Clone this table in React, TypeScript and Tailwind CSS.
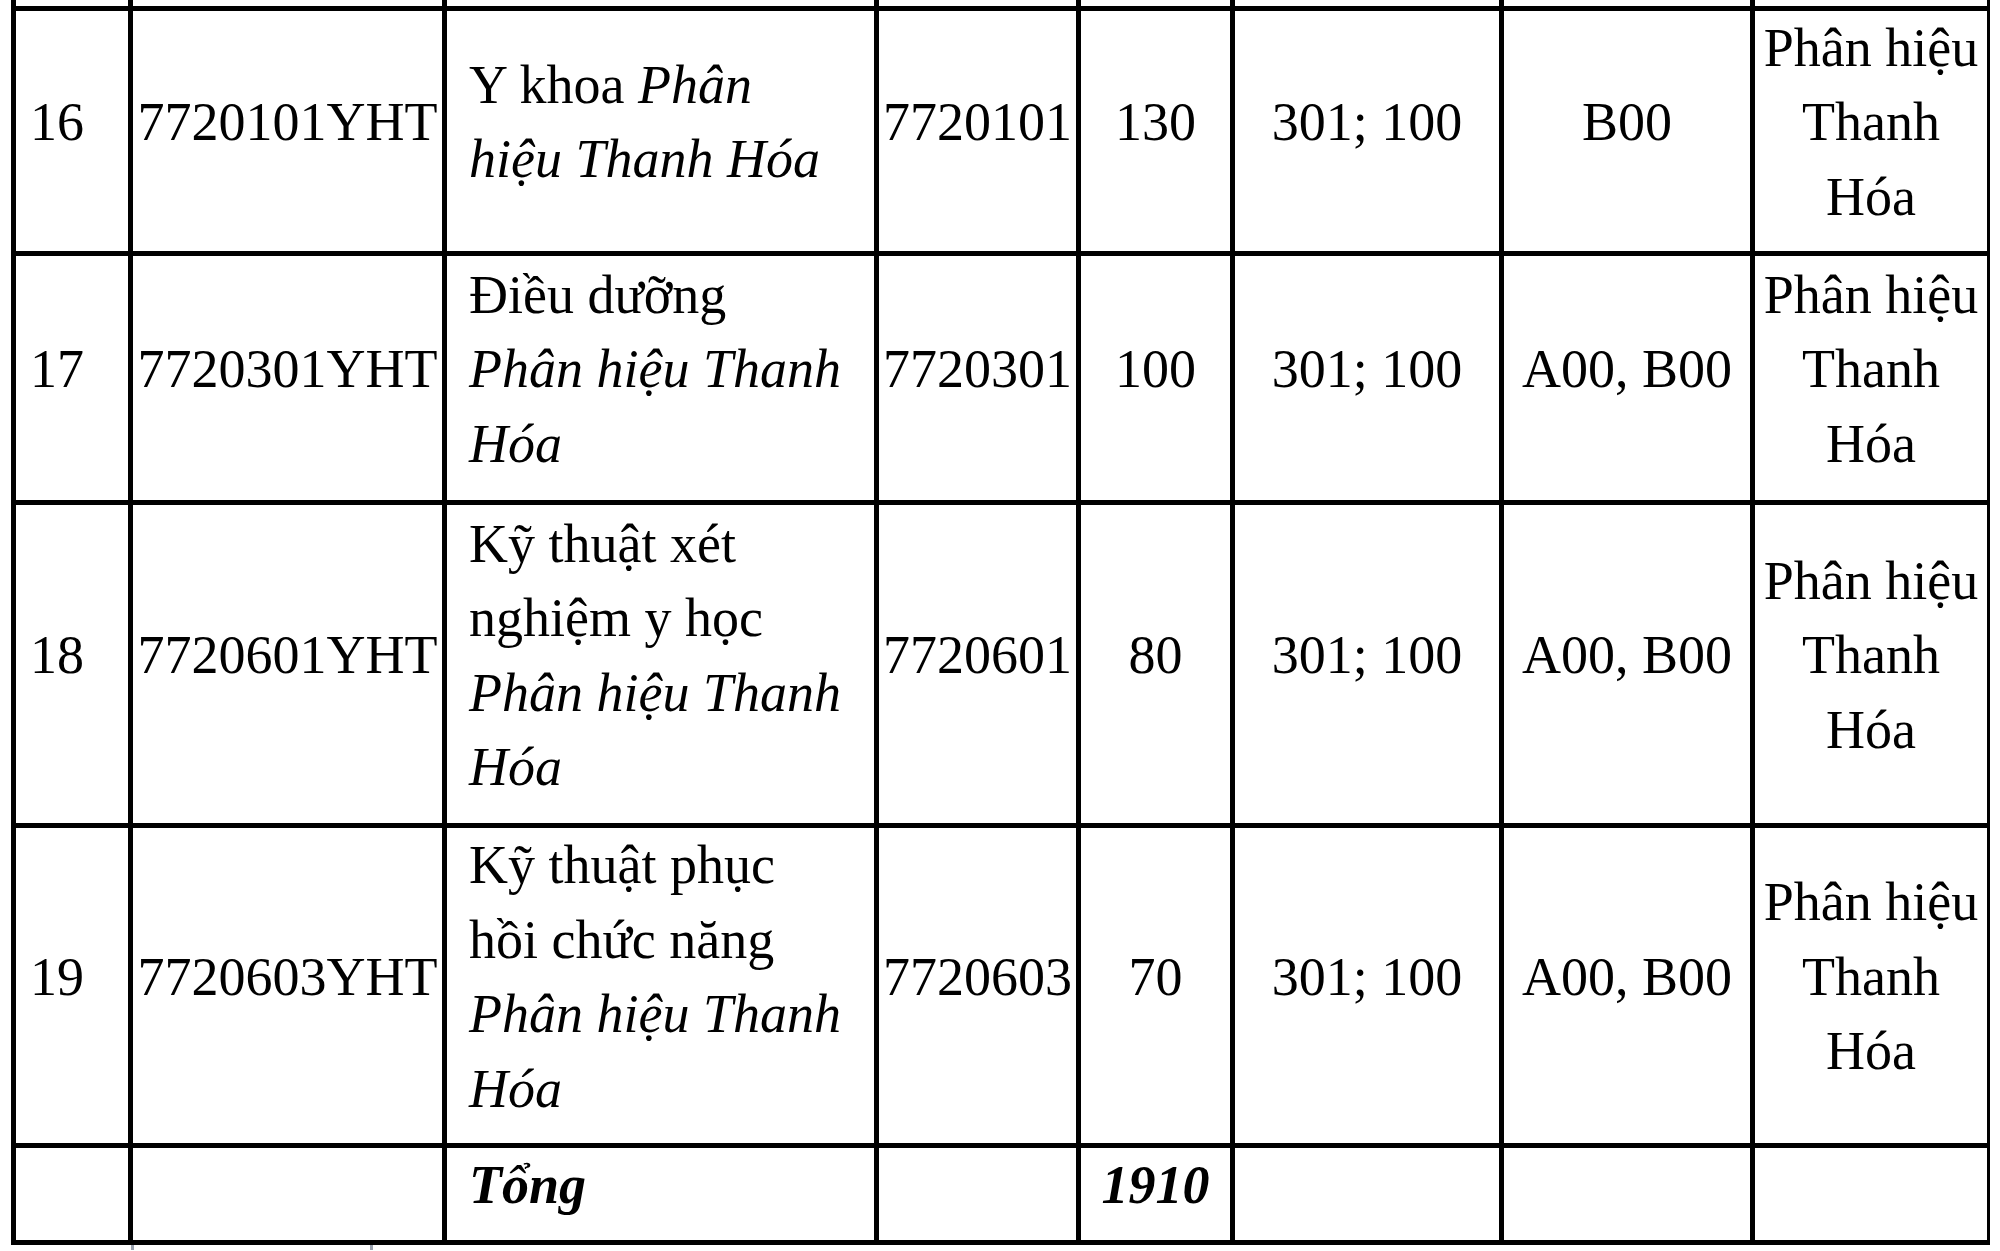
import React from 'react';

type Row = {
  stt: string;
  code: string;
  name?: string;
  branchName?: string;
  majorCode: string;
  quota: string;
  method: string;
  combo: string;
  place: string;
  height: string;
};

const rows: Row[] = [
  {
    stt: '16',
    code: '7720101YHT',
    name: 'Y khoa ',
    branchName: 'Phân hiệu Thanh Hóa',
    majorCode: '7720101',
    quota: '130',
    method: '301; 100',
    combo: 'B00',
    place: 'Phân hiệu Thanh Hóa',
    height: 'h-[245px]',
  },
  {
    stt: '17',
    code: '7720301YHT',
    name: 'Điều dưỡng ',
    branchName: 'Phân hiệu Thanh Hóa',
    majorCode: '7720301',
    quota: '100',
    method: '301; 100',
    combo: 'A00, B00',
    place: 'Phân hiệu Thanh Hóa',
    height: 'h-[249px]',
  },
  {
    stt: '18',
    code: '7720601YHT',
    name: 'Kỹ thuật xét nghiệm y học ',
    branchName: 'Phân hiệu Thanh Hóa',
    majorCode: '7720601',
    quota: '80',
    method: '301; 100',
    combo: 'A00, B00',
    place: 'Phân hiệu Thanh Hóa',
    height: 'h-[323px]',
  },
  {
    stt: '19',
    code: '7720603YHT',
    name: 'Kỹ thuật phục hồi chức năng ',
    branchName: 'Phân hiệu Thanh Hóa',
    majorCode: '7720603',
    quota: '70',
    method: '301; 100',
    combo: 'A00, B00',
    place: 'Phân hiệu Thanh Hóa',
    height: 'h-[320px]',
  },
];

// shared cell look: thick black grid like the Word table
const cell = 'border-[5px] border-black align-middle pt-0 pb-[17px]';
const center = `${cell} text-center px-0`;

export default function App() {
  return (
    <div className="bg-white text-black font-['Liberation_Serif','Times_New_Roman',serif] text-[54px] leading-[74.5px] pl-[11px]">
      <table className="table-fixed border-collapse w-[1975px]">
        <colgroup>
          <col className="w-[117px]" />
          <col className="w-[314px]" />
          <col className="w-[432px]" />
          <col className="w-[202px]" />
          <col className="w-[154px]" />
          <col className="w-[269px]" />
          <col className="w-[251px]" />
          <col className="w-[236px]" />
        </colgroup>
        <tbody>
          {/* tail of the previous row, cut off by the screenshot */}
          <tr className="h-[8px]">
            {Array.from({ length: 8 }).map((_, i) => (
              <td
                key={i}
                className={`border-[5px] border-t-0 border-black p-0 ${i === 7 ? 'border-r-[3px]' : ''}`}
              />
            ))}
          </tr>

          {rows.map((r) => (
            <tr key={r.stt} className={r.height}>
              <td className={`${cell} text-left pl-[14px] pr-0`}>{r.stt}</td>
              <td className={center}>{r.code}</td>
              <td className={`${cell} text-left pl-[22px] pr-[29px]`}>
                {r.name}
                <i>{r.branchName}</i>
              </td>
              <td className={center}>{r.majorCode}</td>
              <td className={center}>{r.quota}</td>
              <td className={center}>{r.method}</td>
              <td className={center}>{r.combo}</td>
              <td className={`${center} border-r-[3px]`}>
                Phân hiệu
                <br />
                Thanh
                <br />
                Hóa
              </td>
            </tr>
          ))}

          {/* total */}
          <tr className="h-[97px]">
            <td className={cell}></td>
            <td className={cell}></td>
            <td className={`${cell} text-left pl-[22px]`}>
              <b>
                <i>Tổng</i>
              </b>
            </td>
            <td className={cell}></td>
            <td className={center}>
              <b>
                <i>1910</i>
              </b>
            </td>
            <td className={cell}></td>
            <td className={cell}></td>
            <td className={`${cell} border-r-[3px]`}></td>
          </tr>
        </tbody>
      </table>

      {/* small scan marks under the table */}
      <div className="flex h-[6px]">
        <div className="ml-[120px] w-[3px] h-[5px] bg-gray-400" />
        <div className="ml-[236px] w-[3px] h-[5px] bg-gray-400" />
      </div>
    </div>
  );
}
